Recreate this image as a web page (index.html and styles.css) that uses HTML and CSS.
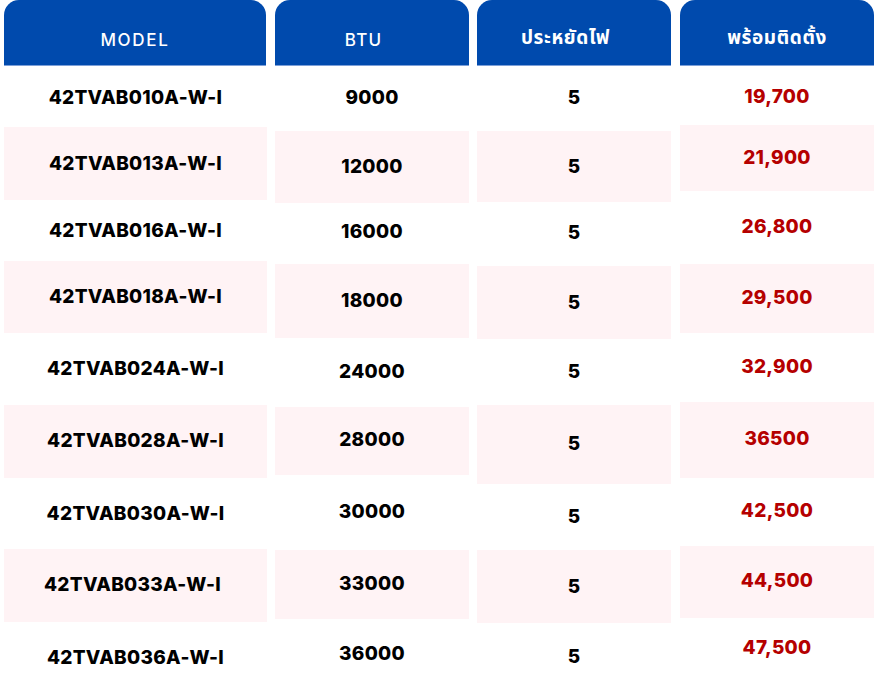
FILE: index.html
```html
<!DOCTYPE html>
<html lang="th">
<head>
<meta charset="utf-8">
<title>Price table</title>
<link rel="stylesheet" href="styles.css">
</head>
<body>
<div class="table">
  <div class="col col-model">
    <div class="head">MODEL</div>
    <div class="cell">42TVAB010A-W-I</div>
    <div class="cell pink">42TVAB013A-W-I</div>
    <div class="cell">42TVAB016A-W-I</div>
    <div class="cell pink">42TVAB018A-W-I</div>
    <div class="cell">42TVAB024A-W-I</div>
    <div class="cell pink">42TVAB028A-W-I</div>
    <div class="cell">42TVAB030A-W-I</div>
    <div class="cell pink shift">42TVAB033A-W-I</div>
    <div class="cell">42TVAB036A-W-I</div>
  </div>
  <div class="col col-btu">
    <div class="head offset">BTU</div>
    <div class="cell">9000</div>
    <div class="cell pink">12000</div>
    <div class="cell">16000</div>
    <div class="cell pink">18000</div>
    <div class="cell">24000</div>
    <div class="cell pink">28000</div>
    <div class="cell">30000</div>
    <div class="cell pink">33000</div>
    <div class="cell">36000</div>
  </div>
  <div class="col col-eco">
    <div class="head thai offset">ประหยัดไฟ</div>
    <div class="cell">5</div>
    <div class="cell pink">5</div>
    <div class="cell">5</div>
    <div class="cell pink">5</div>
    <div class="cell">5</div>
    <div class="cell pink">5</div>
    <div class="cell">5</div>
    <div class="cell pink">5</div>
    <div class="cell">5</div>
  </div>
  <div class="col col-price">
    <div class="head thai">พร้อมติดตั้ง</div>
    <div class="cell">19,700</div>
    <div class="cell pink">21,900</div>
    <div class="cell">26,800</div>
    <div class="cell pink">29,500</div>
    <div class="cell">32,900</div>
    <div class="cell pink">36500</div>
    <div class="cell">42,500</div>
    <div class="cell pink">44,500</div>
    <div class="cell">47,500</div>
  </div>
</div>
</body>
</html>
```

FILE: styles.css
```css
* { box-sizing: border-box; }
html, body { margin: 0; padding: 0; background: #ffffff; }
body { width: 877px; height: 686px; overflow: hidden; font-family: "Inter", "Open Sans", sans-serif; }

.table {
  display: flex;
  align-items: flex-start;
  padding-left: 4px;
}
.col { display: flex; flex-direction: column; }
.col-model { width: 263px; }
.col-btu { width: 194px; margin-left: 8px; }
.col-eco { width: 194px; margin-left: 8px; }
.col-price { width: 194px; margin-left: 9px; }

.head {
  height: 66px;
  background: #004aad;
  border-bottom: 1px solid #7c9fd8;
  border-radius: 15px 15px 0 0;
  color: #ffffff;
  font-size: 17px;
  font-weight: 500;
  letter-spacing: 1.7px;
  line-height: 20px;
  padding-top: 30px;
  text-align: center;
}
.head.offset { padding-right: 17px; }
.col-model .head { margin-right: 1px; }
.col-btu .head { letter-spacing: 1.2px; }
.head.thai { font-family: "Noto Sans Thai", "Noto Sans", "Open Sans", sans-serif; font-size: 19px; letter-spacing: 0.6px; font-weight: 700; padding-top: 29px; }

.cell {
  display: flex;
  justify-content: center;
  align-items: flex-start;
  font-size: 19px;
  font-weight: 800;
  letter-spacing: 0.3px;
  line-height: 20px;
  color: #000000;
}
.cell.pink { background: #fff3f5; }
.cell.shift { padding-right: 6px; }
.col-price .cell { color: #b50000; }

/* MODEL column: rows 66-127-200-261-333-405-478-549-622-686 */
.col-model .cell:nth-child(2)  { height: 61px; padding-top: 22px; }
.col-model .cell:nth-child(3)  { height: 73px; padding-top: 27px; }
.col-model .cell:nth-child(4)  { height: 61px; padding-top: 21px; }
.col-model .cell:nth-child(5)  { height: 72px; padding-top: 26px; }
.col-model .cell:nth-child(6)  { height: 72px; padding-top: 26px; }
.col-model .cell:nth-child(7)  { height: 73px; padding-top: 26px; }
.col-model .cell:nth-child(8)  { height: 71px; padding-top: 26px; }
.col-model .cell:nth-child(9)  { height: 73px; padding-top: 26px; }
.col-model .cell:nth-child(10) { height: 64px; padding-top: 26px; }

/* BTU column: 66-131-203-264-338-407-475-550-619-686 */
.col-btu .cell:nth-child(2)  { height: 65px; padding-top: 22px; }
.col-btu .cell:nth-child(3)  { height: 72px; padding-top: 26px; }
.col-btu .cell:nth-child(4)  { height: 61px; padding-top: 19px; }
.col-btu .cell:nth-child(5)  { height: 74px; padding-top: 27px; }
.col-btu .cell:nth-child(6)  { height: 69px; padding-top: 24px; }
.col-btu .cell:nth-child(7)  { height: 68px; padding-top: 23px; }
.col-btu .cell:nth-child(8)  { height: 75px; padding-top: 27px; }
.col-btu .cell:nth-child(9)  { height: 69px; padding-top: 24px; }
.col-btu .cell:nth-child(10) { height: 67px; padding-top: 25px; }

/* ECO column: 66-131-202-266-339-405-484-550-623-686 */
.col-eco .cell:nth-child(2)  { height: 65px; padding-top: 22px; }
.col-eco .cell:nth-child(3)  { height: 71px; padding-top: 26px; }
.col-eco .cell:nth-child(4)  { height: 64px; padding-top: 21px; }
.col-eco .cell:nth-child(5)  { height: 73px; padding-top: 27px; }
.col-eco .cell:nth-child(6)  { height: 66px; padding-top: 23px; }
.col-eco .cell:nth-child(7)  { height: 79px; padding-top: 29px; }
.col-eco .cell:nth-child(8)  { height: 66px; padding-top: 23px; }
.col-eco .cell:nth-child(9)  { height: 73px; padding-top: 27px; }
.col-eco .cell:nth-child(10) { height: 63px; padding-top: 24px; }

/* PRICE column: 66-125-191-264-333-402-478-546-618-686 */
.col-price .cell:nth-child(2)  { height: 59px; padding-top: 21px; }
.col-price .cell:nth-child(3)  { height: 66px; padding-top: 23px; }
.col-price .cell:nth-child(4)  { height: 73px; padding-top: 26px; }
.col-price .cell:nth-child(5)  { height: 69px; padding-top: 24px; }
.col-price .cell:nth-child(6)  { height: 69px; padding-top: 24px; }
.col-price .cell:nth-child(7)  { height: 76px; padding-top: 27px; }
.col-price .cell:nth-child(8)  { height: 68px; padding-top: 23px; }
.col-price .cell:nth-child(9)  { height: 72px; padding-top: 25px; }
.col-price .cell:nth-child(10) { height: 68px; padding-top: 20px; }
```
